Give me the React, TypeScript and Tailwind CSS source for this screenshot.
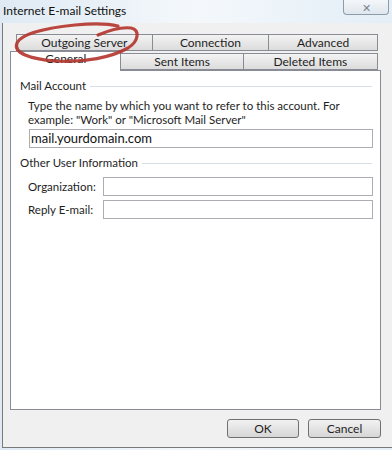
import React from 'react';

const tabBase =
  'flex items-center justify-center border border-[#898c95] bg-gradient-to-b from-[#f3f3f3] to-[#dcdcdc] text-[12px] leading-none text-[#1e1e1e]';

function Field({ label }: { label: string }) {
  return (
    <div className="flex items-center">
      <span className="w-[75px] whitespace-nowrap text-[11.5px] text-[#1e1e1e]">{label}</span>
      <div className="h-[19px] flex-1 border border-[#abadb3] bg-white" />
    </div>
  );
}

function GroupTitle({ children }: { children: React.ReactNode }) {
  return (
    <div className="flex h-[18px] items-center gap-[4px] pl-[9px] pr-[8px]">
      <span className="whitespace-nowrap text-[11.5px] text-[#1e1e1e]">{children}</span>
      <div className="h-px flex-1 bg-[#d5dfe5]" />
    </div>
  );
}

export default function App() {
  return (
    <div className="relative h-[450px] w-[392px] overflow-hidden bg-gradient-to-r from-[#dfeaf4] via-[#f4f8fb] to-[#e3eef7] font-['Lato',sans-serif]">
      {/* title bar */}
      <div className="flex h-[23px] items-start justify-between">
        <span className="pl-[3px] pt-[2px] text-[12px] text-[#111]">Internet E-mail Settings</span>
        <div className="mr-[3px] flex h-[15px] w-[46px] items-center justify-center rounded-b-[4px] border border-t-0 border-[#8e9bab] bg-gradient-to-b from-[#f4f7fa] to-[#dfe6ee] text-[11px] leading-none text-[#7b8591]">
          ✕
        </div>
      </div>

      {/* client area */}
      <div className="ml-[2px] flex h-[425px] flex-col border-b border-l border-[#7a7a7a] bg-[#f0f0f0] pl-[7px] pr-[11px]">
        {/* tabs */}
        <div className="mt-[11px] flex h-[17px] pl-[6px] pr-[3px]">
          <div className={`${tabBase} w-[137px]`}>Outgoing Server</div>
          <div className={`${tabBase} -ml-px w-[118px]`}>Connection</div>
          <div className={`${tabBase} -ml-px w-[110px]`}>Advanced</div>
        </div>
        <div className="flex h-[19px] items-end pr-[3px]">
          <div className="z-10 -mb-px flex h-[20px] w-[112px] items-start justify-center border border-b-0 border-[#898c95] bg-white pt-[1px] text-[12px] leading-none text-[#1e1e1e]">
            General
          </div>
          <div className={`${tabBase} h-[17px] w-[123px] border-l-0`}>Sent Items</div>
          <div className={`${tabBase} -ml-px h-[17px] w-[136px]`}>Deleted Items</div>
        </div>

        {/* panel */}
        <div className="flex h-[340px] flex-col border border-[#898c95] bg-white pt-[6px]">
          <GroupTitle>Mail Account</GroupTitle>
          <div className="mt-[4px] whitespace-nowrap pl-[17px] pr-[8px] text-[11.5px] leading-[14px] text-[#1e1e1e]">
            <div>Type the name by which you want to refer to this account. For</div>
            <div>example: "Work" or "Microsoft Mail Server"</div>
          </div>
          <div className="ml-[18px] mr-[7px] mt-[2px] flex h-[19px] items-center border border-[#abadb3] bg-white pl-[1px] text-[13px] text-[#111]">
            mail.yourdomain.com
          </div>
          <div className="mt-[6px]">
            <GroupTitle>Other User Information</GroupTitle>
          </div>
          <div className="mt-[5px] flex flex-col gap-[4px] pl-[17px] pr-[7px]">
            <Field label="Organization:" />
            <Field label="Reply E-mail:" />
          </div>
        </div>

        {/* buttons */}
        <div className="mt-[9px] flex justify-end gap-[9px]">
          <button className="h-[19px] w-[72px] rounded-[3px] border border-[#707070] bg-gradient-to-b from-[#f2f2f2] to-[#d6d6d6] text-[12px] leading-none text-[#1e1e1e]">
            OK
          </button>
          <button className="h-[19px] w-[73px] rounded-[3px] border border-[#707070] bg-gradient-to-b from-[#f2f2f2] to-[#d6d6d6] text-[12px] leading-none text-[#1e1e1e]">
            Cancel
          </button>
        </div>
      </div>

      {/* red annotation circle */}
      <svg className="pointer-events-none absolute left-0 top-0 z-20" width="160" height="80" viewBox="0 0 160 80">
        <path
          d="M98 35 C110 30 123 27 131 28 C140 30 139 41 128 48 C112 57 85 63 55 61 C30 59 13 53 17 43 C21 34 45 28 75 25 C95 23 110 24 118 26"
          fill="none"
          stroke="#b3342c"
          strokeWidth="3.2"
          strokeLinecap="round"
          opacity="0.9"
        />
      </svg>
    </div>
  );
}
